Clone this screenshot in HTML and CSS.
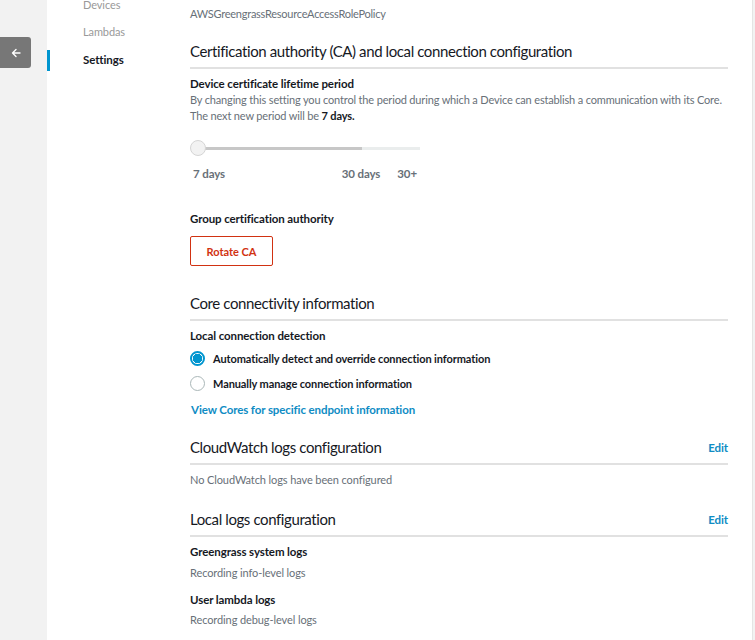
FILE: index.html
```html
<!DOCTYPE html>
<html>
<head>
<meta charset="utf-8">
<link rel="stylesheet" href="styles.css">
</head>
<body>
<div class="rail">
  <button class="back" aria-label="Back">
    <svg width="12" height="12" viewBox="0 0 12 12"><path d="M10 6H2.5M6 2.5L2.5 6L6 9.5" fill="none" stroke="#fff" stroke-width="1.4" stroke-linecap="round" stroke-linejoin="round"/></svg>
  </button>
</div>
<div class="main">
  <nav class="nav">
    <a class="nav-item">Devices</a>
    <a class="nav-item">Lambdas</a>
    <a class="nav-item active">Settings</a>
  </nav>
  <div class="content">
    <p class="muted policy">AWSGreengrassResourceAccessRolePolicy</p>

    <section class="section s1">
      <div class="section-head"><h2>Certification authority (CA) and local connection configuration</h2></div>
      <h3 class="label first">Device certificate lifetime period</h3>
      <p class="muted desc">By changing this setting you control the period during which a Device can establish a communication with its Core.<br>The next new period will be <b>7 days.</b></p>
      <div class="slider">
        <span class="thumb"></span>
        <span class="track"><span class="fill"></span></span>
      </div>
      <div class="ticks">
        <span class="tick t7">7 days</span>
        <span class="tick t30">30 days</span>
        <span class="tick tplus">30+</span>
      </div>
      <h3 class="label gca">Group certification authority</h3>
      <button class="btn-danger">Rotate CA</button>
    </section>

    <section class="section s2">
      <div class="section-head"><h2>Core connectivity information</h2></div>
      <h3 class="label first">Local connection detection</h3>
      <label class="radio"><span class="dot checked"></span>Automatically detect and override connection information</label>
      <label class="radio"><span class="dot"></span>Manually manage connection information</label>
      <a class="link">View Cores for specific endpoint information</a>
    </section>

    <section class="section s3">
      <div class="section-head"><h2>CloudWatch logs configuration</h2><a class="edit">Edit</a></div>
      <p class="muted note">No CloudWatch logs have been configured</p>
    </section>

    <section class="section s4">
      <div class="section-head"><h2>Local logs configuration</h2><a class="edit">Edit</a></div>
      <h3 class="label first">Greengrass system logs</h3>
      <p class="muted val">Recording info-level logs</p>
      <h3 class="label second">User lambda logs</h3>
      <p class="muted val">Recording debug-level logs</p>
    </section>
  </div>
</div>
<div class="edge"></div>
</body>
</html>
```
FILE: styles.css
```css
* { box-sizing: border-box; }
html, body { margin: 0; padding: 0; }
body {
  width: 755px;
  height: 640px;
  overflow: hidden;
  display: flex;
  font-family: "Lato", "Open Sans", sans-serif;
  font-size: 11px;
  letter-spacing: -0.1px;
  color: #16191f;
  background: #fff;
}
.rail {
  width: 47px;
  flex: none;
  background: #f2f2f2;
  padding-top: 37px;
}
.back {
  width: 31px;
  height: 31px;
  border: none;
  border-radius: 0 3px 3px 0;
  background: #777;
  display: flex;
  align-items: center;
  justify-content: center;
  padding: 0;
}
.main {
  flex: 1;
  display: flex;
  background: #fff;
}
.nav {
  width: 143px;
  flex: none;
  display: flex;
  flex-direction: column;
  margin-top: -3px;
}
.nav-item {
  display: block;
  line-height: 16px;
  padding-left: 33px;
  border-left: 3px solid transparent;
  color: #999;
  margin-bottom: 11px;
}
.nav-item.active {
  color: #16191f;
  font-weight: 700;
  font-size: 11.5px;
  border-left-color: #0095cf;
  padding-top: 2px;
  padding-bottom: 3px;
  margin-top: -1px;
}
.content {
  width: 538px;
  flex: none;
}
p, h2, h3 { margin: 0; }
.muted { color: #687078; }
.policy { line-height: 16px; margin-top: 6px; letter-spacing: -0.25px; }
.section-head {
  display: flex;
  align-items: center;
  justify-content: space-between;
  border-bottom: 2px solid #e1e1e1;
  padding-bottom: 6px;
}
h2 {
  font-size: 15px;
  line-height: 20px;
  font-weight: 400;
  letter-spacing: -0.4px;
  color: #16191f;
}
.s1 .section-head { margin-top: 19px; }
.s2 .section-head { margin-top: 27px; }
.s3 .section-head { margin-top: 19px; }
.s4 .section-head { margin-top: 21px; }
.label {
  font-size: 11.5px;
  font-weight: 700;
  line-height: 16px;
}
.label.first { margin-top: 7px; }
.label.second { margin-top: 11px; }
.desc { line-height: 16px; letter-spacing: -0.16px; white-space: nowrap; }
.desc b { color: #16191f; }
.slider {
  position: relative;
  margin-top: 16px;
  height: 16px;
  width: 230px;
  display: flex;
  align-items: center;
}
.track {
  margin-left: 14px;
  flex: 1;
  height: 3px;
  background: #eaeded;
}
.fill { display: block; width: 158px; height: 3px; background: #c7c7c7; }
.thumb {
  position: absolute;
  left: 0;
  top: 0;
  width: 16px;
  height: 16px;
  border-radius: 50%;
  background: #f2f2f2;
  border: 1px solid #d5d5d5;
  z-index: 1;
}
.ticks {
  display: flex;
  margin-top: 10px;
  width: 230px;
  line-height: 16px;
  font-size: 11.5px;
  font-weight: 700;
  color: #687078;
}
.t7 { margin-left: 3px; }
.t30 { margin-left: auto; }
.tplus { margin-left: 17px; margin-right: 3px; }
.gca { margin-top: 29px; }
.btn-danger {
  display: block;
  margin-top: 9px;
  width: 83px;
  height: 30px;
  border: 1.5px solid #d13212;
  border-radius: 2px;
  background: #fff;
  color: #d13212;
  font-family: inherit;
  font-size: 11px;
  font-weight: 700;
  padding: 0;
}
.radio {
  display: flex;
  align-items: center;
  gap: 8px;
  height: 16px;
  margin-top: 6px;
  font-weight: 700;
  color: #16191f;
}
.radio + .radio { margin-top: 9px; }
.dot {
  width: 15px;
  height: 15px;
  border-radius: 50%;
  border: 1px solid #aab7b8;
  background: #fff;
  flex: none;
}
.dot.checked {
  border: 2px solid #0095cf;
  background: radial-gradient(circle, #0095cf 0 4.5px, #fff 5px);
}
.link {
  display: block;
  margin-top: 11px;
  margin-left: 1px;
  line-height: 16px;
  font-size: 11.5px;
  color: #0f8cc4;
  font-weight: 700;
}
.edit {
  color: #0f8cc4;
  font-size: 11.5px;
  font-weight: 700;
}
.note { margin-top: 7px; line-height: 16px; }
.val { margin-top: 5px; line-height: 16px; }
.s4 .val + .label + .val { margin-top: 4px; }
.edge {
  width: 3px;
  flex: none;
  border-left: 1px solid #e4e4e4;
  background: #f2f2f2;
}
```
